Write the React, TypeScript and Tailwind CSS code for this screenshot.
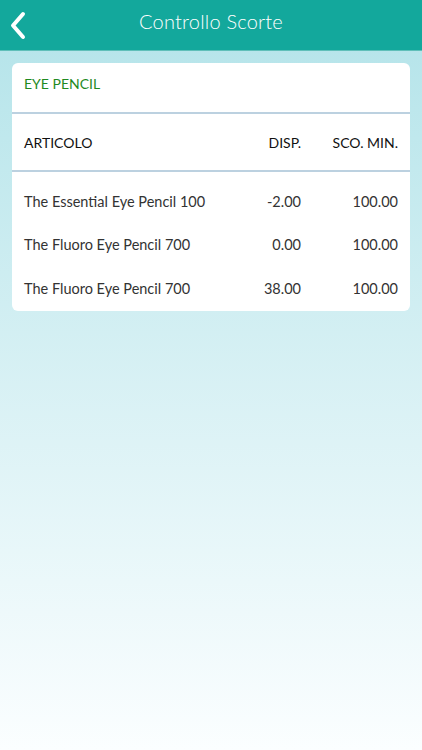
import React from "react";

const rows = [
  { name: "The Essential Eye Pencil 100", disp: "-2.00", min: "100.00" },
  { name: "The Fluoro Eye Pencil 700", disp: "0.00", min: "100.00" },
  { name: "The Fluoro Eye Pencil 700", disp: "38.00", min: "100.00" },
];

export default function App() {
  return (
    <div
      className="w-[422px] h-[750px] flex flex-col bg-gradient-to-b from-[#b2e3e9] to-[#fbfeff] text-[#222]"
      style={{ fontFamily: "Lato, 'Open Sans', sans-serif" }}
    >
      <div className="h-[51px] bg-[#13a89c] border-b border-[#5fbfb9] relative flex justify-center pt-[7px] shrink-0">
        <svg
          className="absolute left-[8px] top-[11px]"
          width="20"
          height="30"
          viewBox="0 0 20 30"
          fill="none"
        >
          <path d="M15 3 L5 14.5 L15 26" stroke="white" strokeWidth="4" strokeLinecap="round" strokeLinejoin="round" />
        </svg>
        <span className="text-white text-[20px] leading-[28px] font-light tracking-[0.2px]">Controllo Scorte</span>
      </div>
      <div className="px-[12px] pt-[12px]">
        <div className="bg-white rounded-[6px] overflow-hidden">
          <div className="h-[51px] flex items-start pt-[12px] px-[12px] text-[#1f8a1f] text-[14px] leading-[18px] border-b-2 border-[#bcd1e0]">
            EYE PENCIL
          </div>
          <div className="h-[58px] flex items-center px-[12px] text-[14px] text-[#111] border-b-2 border-[#bcd1e0]">
            <span className="flex-1">ARTICOLO</span>
            <span className="w-[60px] text-right">DISP.</span>
            <span className="w-[97px] text-right">SCO. MIN.</span>
          </div>
          <div className="pt-[8px]">
            {rows.map((r, i) => (
              <div key={i} className="h-[43.5px] flex items-center px-[12px] text-[14.5px] text-[#333]">
                <span className="flex-1">{r.name}</span>
                <span className="w-[60px] text-right">{r.disp}</span>
                <span className="w-[97px] text-right">{r.min}</span>
              </div>
            ))}
          </div>
        </div>
      </div>
    </div>
  );
}
